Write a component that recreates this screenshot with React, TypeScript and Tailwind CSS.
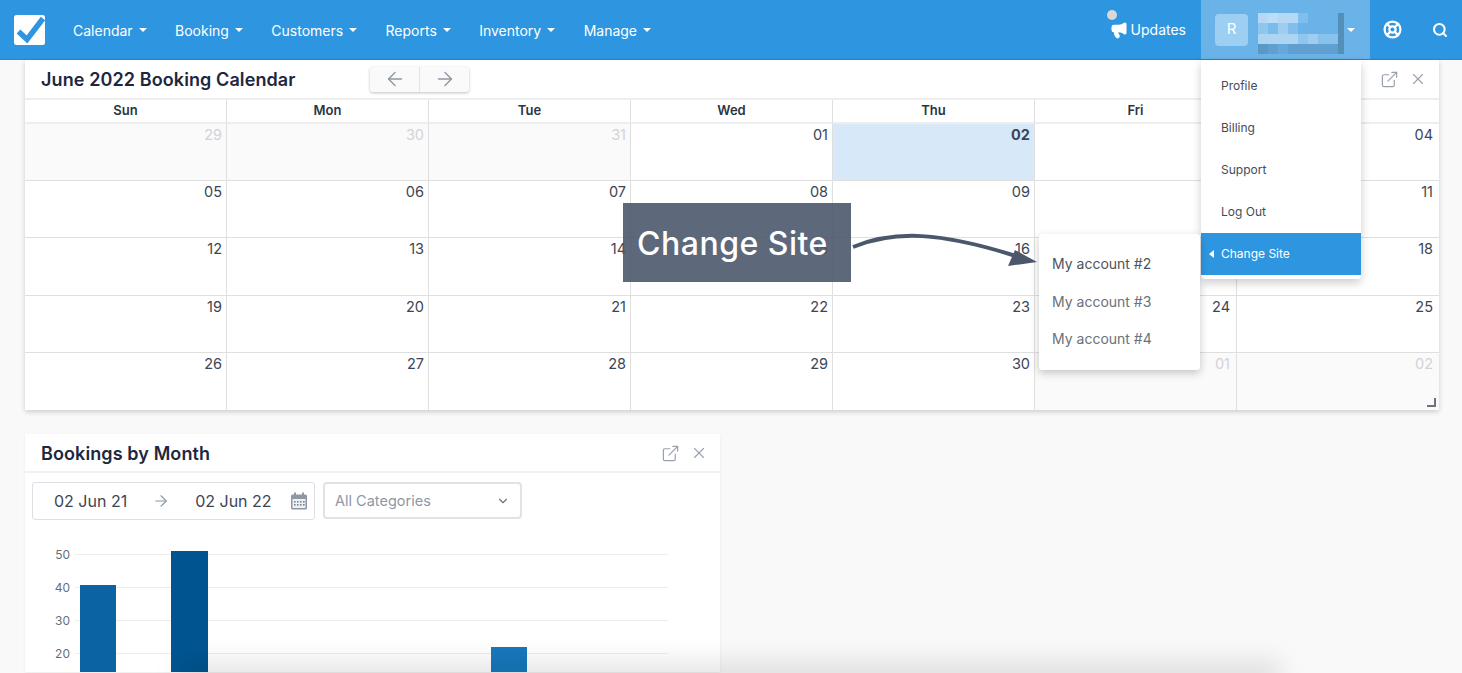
import React from 'react';
import { ArrowLeft, ArrowRight, ChevronDown, ExternalLink, LifeBuoy, Megaphone, Search, X } from 'lucide-react';

type Day = { n: string; out?: boolean; today?: boolean };

const navItems = ['Calendar', 'Booking', 'Customers', 'Reports', 'Inventory', 'Manage'];
const weekdays = ['Sun', 'Mon', 'Tue', 'Wed', 'Thu', 'Fri', 'Sat'];
const menuItems = ['Profile', 'Billing', 'Support', 'Log Out'];

const days: Day[] = [
  { n: '29', out: true }, { n: '30', out: true }, { n: '31', out: true }, { n: '01' }, { n: '02', today: true }, { n: '03' }, { n: '04' },
  { n: '05' }, { n: '06' }, { n: '07' }, { n: '08' }, { n: '09' }, { n: '10' }, { n: '11' },
  { n: '12' }, { n: '13' }, { n: '14' }, { n: '15' }, { n: '16' }, { n: '17' }, { n: '18' },
  { n: '19' }, { n: '20' }, { n: '21' }, { n: '22' }, { n: '23' }, { n: '24' }, { n: '25' },
  { n: '26' }, { n: '27' }, { n: '28' }, { n: '29' }, { n: '30' }, { n: '01', out: true }, { n: '02', out: true },
];

// blurred account name, eight soft columns and a narrow dark one
const mosaic = [
  'bg-white/50', 'bg-white/55', 'bg-white/50', 'bg-white/50', 'bg-white/15', 'bg-transparent', 'bg-transparent', 'bg-transparent', 'bg-black/20',
  'bg-white/25', 'bg-white/10', 'bg-white/35', 'bg-white/15', 'bg-transparent', 'bg-transparent', 'bg-transparent', 'bg-transparent', 'bg-black/20',
  'bg-white/45', 'bg-white/45', 'bg-white/45', 'bg-white/45', 'bg-white/25', 'bg-white/35', 'bg-white/20', 'bg-white/20', 'bg-black/20',
  'bg-black/15', 'bg-black/10', 'bg-black/5', 'bg-black/10', 'bg-black/10', 'bg-black/10', 'bg-black/10', 'bg-black/10', 'bg-black/20',
];

const Caret = ({ className = 'ml-[6px]' }: { className?: string }) => (
  <span className={`${className} inline-block h-0 w-0 border-x-[4px] border-t-[4px] border-x-transparent border-t-white`} />
);

const CardActions = () => (
  <div className="flex items-center gap-[10px] text-[#98a0ac]">
    <ExternalLink className="h-[19px] w-[19px]" strokeWidth={1.5} />
    <X className="h-[18px] w-[18px]" strokeWidth={1.5} />
  </div>
);

const Logo = () => (
  <svg width="32" height="31" viewBox="0 0 32 31" className="shrink-0">
    <rect x="0" y="0" width="31" height="30" rx="2.5" fill="#fff" />
    <path d="M4.5 16.5l8.5 8L29 3.5" fill="none" stroke="#2e96e0" strokeWidth="5.5" />
  </svg>
);

const CalendarIcon = () => (
  <svg width="18" height="18" viewBox="0 0 18 18" className="ml-[18px] shrink-0">
    <rect x="1" y="2.5" width="16" height="15" rx="1.5" fill="#8e97a5" />
    <rect x="4" y="0.5" width="2" height="3" fill="#8e97a5" />
    <rect x="12" y="0.5" width="2" height="3" fill="#8e97a5" />
    <rect x="2.5" y="7" width="13" height="9" fill="#eef0f2" />
    {[4, 7, 10, 13].map((x) => (
      <g key={x} fill="#7b8492">
        <rect x={x} y="9" width="1.6" height="1.6" />
        <rect x={x} y="12" width="1.6" height="1.6" />
      </g>
    ))}
  </svg>
);

const Header = () => (
  <header className="flex h-[60px] shrink-0 items-center border-b border-[#2a86cb] bg-[#2e96e0] text-white">
    <div className="ml-[14px] mr-[27px] pt-[1px]"><Logo /></div>
    <nav className="flex items-center gap-[28.4px] pt-[1px] text-[14px]">
      {navItems.map((item) => (
        <span key={item} className="flex items-center">{item}<Caret /></span>
      ))}
    </nav>
    <div className="ml-auto flex h-full items-center">
      <div className="relative mr-[15px] flex items-center gap-[3px] text-[14px]">
        <span className="absolute -top-[9px] left-[-3px] h-[10px] w-[10px] rounded-full bg-[#d8d8d8]" />
        <Megaphone className="h-[18px] w-[18px] fill-white" strokeWidth={2} />
        Updates
      </div>
      <div className="flex h-full w-[169px] items-center bg-[#6ab3e8] pl-[14px]">
        <div className="flex h-[32px] w-[33px] items-center justify-center rounded-[4px] bg-[#9dcff2] text-[15px]">R</div>
        <div className="ml-[10px] mt-[8px] grid h-[41px] w-[86px] grid-cols-[repeat(8,10px)_6px] grid-rows-4">
          {mosaic.map((tone, i) => <div key={i} className={tone} />)}
        </div>
        <Caret className="ml-[3px]" />
      </div>
      <div className="flex w-[92px] items-center justify-between pl-[13px] pr-[14px]">
        <LifeBuoy className="h-[19px] w-[19px]" strokeWidth={2.8} />
        <Search className="h-[16px] w-[16px]" strokeWidth={3} />
      </div>
    </div>
  </header>
);

const CalendarCard = () => (
  <section className="bg-white shadow-[0_2px_5px_rgba(0,0,0,0.18)]">
    <div className="flex h-[38px] items-center justify-between pl-[16px] pr-[12px]">
      <div className="flex items-center">
        <h2 className="w-[329px] pt-[1px] text-[18px] font-semibold tracking-[0.1px] text-[#1d2740]">June 2022 Booking Calendar</h2>
        <div className="flex h-[25px] w-[99px] rounded-[3px] bg-[#fafafa] text-[#8e97a5] shadow-[0_1px_3px_rgba(0,0,0,0.25)]">
          <span className="flex flex-1 items-center justify-center border-r border-[#e4e4e4]"><ArrowLeft className="h-[22px] w-[22px]" strokeWidth={1.5} /></span>
          <span className="flex flex-1 items-center justify-center"><ArrowRight className="h-[22px] w-[22px]" strokeWidth={1.5} /></span>
        </div>
      </div>
      <CardActions />
    </div>
    <div className="grid grid-cols-7 border-t-2 border-[#eeeeee]">
      {weekdays.map((d, i) => (
        <div key={d} className={`flex h-[24px] items-center justify-center border-b-2 border-[#eeeeee] text-[13px] font-semibold text-[#2b3444] ${i < 6 ? 'border-r border-r-[#dfdfdf]' : ''}`}>{d}</div>
      ))}
    </div>
    <div className="relative grid grid-cols-7">
      {days.map((d, i) => (
        <div
          key={i}
          className={`h-[57.2px] text-right text-[14.5px] ${i % 7 >= 5 ? 'pr-[6px]' : 'pr-[4px]'} ${i % 7 < 6 ? 'border-r border-r-[#dfdfdf]' : ''} ${i < 28 ? 'border-b border-b-[#dfdfdf]' : ''} ${d.out ? 'bg-[#fafafa] text-[#d0d3d8]' : 'text-[#3c4556]'} ${d.today ? 'bg-[#d7e9f8] font-bold text-[#1d2740]' : ''}`}
        >
          {d.n}
        </div>
      ))}
      <span className="absolute bottom-[3px] right-[3px] h-[9px] w-[9px] border-b-2 border-r-2 border-[#6b7280]" />
    </div>
  </section>
);

const BookingsChart = () => (
  <svg width="660" height="140" viewBox="0 0 660 140" className="block">
    {[50, 40, 30, 20].map((v, i) => (
      <g key={v}>
        <line x1="50" x2="643" y1={22.5 + i * 33} y2={22.5 + i * 33} stroke="#ececec" />
        <text x="45" y={27 + i * 33} textAnchor="end" fontSize="12" fill="#666f7d" fontFamily="Inter, sans-serif">{v}</text>
      </g>
    ))}
    <rect x="55" y="53" width="36" height="90" fill="#0b63a3" />
    <rect x="146" y="19" width="37" height="124" fill="#005591" />
    <rect x="466" y="115" width="36" height="30" fill="#1878bc" />
  </svg>
);

const BookingsCard = () => (
  <section className="mt-[24px] w-[695px] bg-white shadow-[0_1px_3px_rgba(0,0,0,0.06)]">
    <div className="flex h-[39px] items-center justify-between border-b-2 border-[#f1f1f1] pl-[16px] pr-[12px] pt-[2px]">
      <h2 className="text-[18px] font-semibold tracking-[0.1px] text-[#1d2740]">Bookings by Month</h2>
      <CardActions />
    </div>
    <div className="flex items-center gap-[8px] pl-[7px] pt-[9px]">
      <div className="flex h-[38px] w-[283px] items-center rounded-[3px] border border-[#dcdfe3] pl-[21px] text-[16px] text-[#3c4556]">
        <span>02 Jun 21</span>
        <ArrowRight className="ml-[25px] h-[18px] w-[18px] text-[#8e97a5]" strokeWidth={1.5} />
        <span className="ml-[25px]">02 Jun 22</span>
        <CalendarIcon />
      </div>
      <div className="flex h-[37px] w-[199px] items-center justify-between rounded-[4px] border-2 border-[#dfe2e6] pl-[10px] pr-[10px] text-[14.5px] text-[#8e97a5]">
        All Categories
        <ChevronDown className="h-[14px] w-[14px] text-[#6b7280]" strokeWidth={2} />
      </div>
    </div>
    <div className="pt-[12px]"><BookingsChart /></div>
  </section>
);

const App = () => (
  <div className="relative flex h-[673px] w-[1462px] flex-col overflow-hidden bg-[#f9f9f9] font-['Inter',sans-serif]">
    <Header />
    <main className="flex-1 pl-[25px] pr-[23px]">
      <CalendarCard />
      <BookingsCard />
    </main>

    {/* user menu */}
    <div className="absolute left-[1201px] top-[60px] w-[160px] rounded-b-[3px] bg-white pb-[4px] pt-[5px] text-[12px] text-[#444b57] shadow-[0_4px_10px_rgba(0,0,0,0.2)]">
      {menuItems.map((m) => (
        <div key={m} className="flex h-[42px] items-center pl-[20px]">{m}</div>
      ))}
      <div className="flex h-[42px] items-center bg-[#2e96e0] pl-[8px] text-white">
        <span className="mr-[7px] h-0 w-0 border-y-[4px] border-r-[5px] border-y-transparent border-r-white" />
        Change Site
      </div>
    </div>

    {/* site submenu */}
    <div className="absolute left-[1039px] top-[234px] flex h-[136px] w-[161px] flex-col gap-[16.5px] rounded-[3px] bg-white pl-[13px] pt-[19px] text-[14px] text-[#6b7079] shadow-[0_3px_9px_rgba(0,0,0,0.22)]">
      <span className="text-[#4d535c]">My account #2</span>
      <span>My account #3</span>
      <span>My account #4</span>
    </div>

    {/* annotation */}
    <div className="absolute left-[623px] top-[203px] flex h-[79px] w-[228px] items-center pl-[14px] pt-[3px] text-[32px] font-medium tracking-[0.5px] text-white bg-[#4b586b]/90">
      Change Site
    </div>
    <svg className="absolute left-[850px] top-[230px]" width="190" height="40" viewBox="0 0 190 40">
      <path d="M3 17C45 0 90 2 166 26" fill="none" stroke="#4b586b" strokeWidth="4" />
      <path d="M158 36l29-4-22-12z" fill="#4b586b" />
    </svg>

    <div className="absolute bottom-[-16px] left-[180px] h-[28px] w-[1100px] bg-black/10 blur-[12px]" />
  </div>
);

export default App;
